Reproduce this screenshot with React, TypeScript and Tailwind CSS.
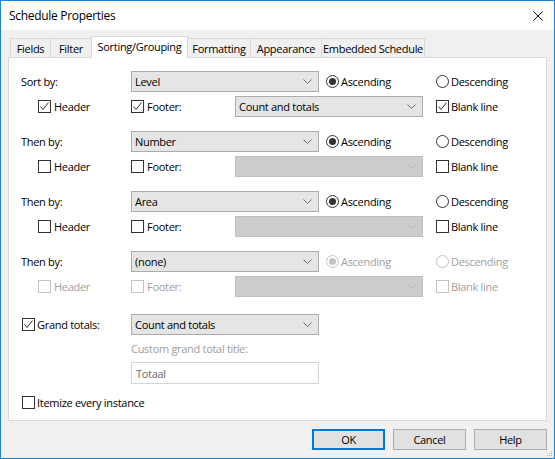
import React from 'react';

const FONT = "font-['Open_Sans',sans-serif] tracking-[-0.3px]";

function Check({ checked = false, disabled = false }: { checked?: boolean; disabled?: boolean }) {
    return (
        <span
            className={`w-[13px] h-[13px] border bg-white flex items-center justify-center shrink-0 ${
                disabled ? 'border-[#c4c4c4]' : 'border-[#333333]'
            }`}
        >
            {checked && (
                <svg width="11" height="11" viewBox="0 0 11 11">
                    <path d="M1.5 5.5 L4 8.5 L9.5 1.5" fill="none" stroke="#333333" strokeWidth="1" />
                </svg>
            )}
        </span>
    );
}

function Radio({ checked = false, disabled = false }: { checked?: boolean; disabled?: boolean }) {
    return (
        <span
            className={`w-[13px] h-[13px] rounded-full border bg-white flex items-center justify-center shrink-0 ${
                disabled ? 'border-[#c4c4c4]' : 'border-[#333333]'
            }`}
        >
            {checked && (
                <span className={`w-[7px] h-[7px] rounded-full ${disabled ? 'bg-[#c4c4c4]' : 'bg-[#333333]'}`} />
            )}
        </span>
    );
}

function Combo({ value = '', disabled = false }: { value?: string; disabled?: boolean }) {
    return (
        <div
            className={`h-[21px] w-[188px] shrink-0 border flex items-center justify-between pl-[3px] pr-[6px] ${
                disabled ? 'bg-[#cccccc] border-[#bfbfbf]' : 'bg-[#e5e5e5] border-[#acacac]'
            }`}
        >
            <span className="text-black">{value}</span>
            <svg width="9" height="5" viewBox="0 0 9 5">
                <path
                    d="M0.5 0.5 L4.5 4.5 L8.5 0.5"
                    fill="none"
                    stroke={disabled ? '#b5b5b5' : '#707070'}
                    strokeWidth="1"
                />
            </svg>
        </div>
    );
}

type GroupProps = {
    label: string;
    value: string;
    disabled?: boolean;
    header?: boolean;
    footer?: boolean;
    footerValue?: string;
    blank?: boolean;
};

function SortGroup({ label, value, disabled = false, header, footer, footerValue, blank }: GroupProps) {
    const txt = disabled ? 'text-[#a0a0a0]' : 'text-black';
    return (
        <div className="flex flex-col gap-[4px]">
            <div className="flex items-center h-[21px]">
                <span className="w-[110px] shrink-0">{label}</span>
                <Combo value={value} />
                <div className="flex items-center w-[110px] ml-[7px] gap-[2px]">
                    <Radio checked disabled={disabled} />
                    <span className={txt}>Ascending</span>
                </div>
                <div className="flex items-center gap-[2px]">
                    <Radio disabled={disabled} />
                    <span className={txt}>Descending</span>
                </div>
            </div>
            <div className="flex items-center h-[21px] pl-[17px]">
                <div className="flex items-center w-[93px] gap-[3px]">
                    <Check checked={header} disabled={disabled} />
                    <span className={txt}>Header</span>
                </div>
                <div className="flex items-center w-[104px] gap-[3px]">
                    <Check checked={footer} disabled={disabled} />
                    <span className={txt}>Footer:</span>
                </div>
                <Combo value={footerValue} disabled={!footer} />
                <div className="flex items-center ml-[13px] gap-[2px]">
                    <Check checked={blank} disabled={disabled} />
                    <span className={txt}>Blank line</span>
                </div>
            </div>
        </div>
    );
}

const tabs = [
    { name: 'Fields', w: 'w-[41px]' },
    { name: 'Filter', w: 'w-[42px]' },
    { name: 'Sorting/Grouping', w: 'w-[97px]', active: true },
    { name: 'Formatting', w: 'w-[64px]' },
    { name: 'Appearance', w: 'w-[72px]' },
    { name: 'Embedded Schedule', w: 'w-[104px]' },
];

export default function App() {
    return (
        <div className={`${FONT} text-[11px] leading-[15px] text-black w-[555px] h-[459px] border border-[#1883d7] bg-[#f0f0f0] relative overflow-hidden`}>
            {/* title bar */}
            <div className="h-[29px] bg-white flex items-center justify-between pl-[8px] pr-[11px]">
                <span className="text-[12px]">Schedule Properties</span>
                <svg width="10" height="10" viewBox="0 0 10 10">
                    <path d="M0.5 0.5 L9.5 9.5 M9.5 0.5 L0.5 9.5" stroke="#111" strokeWidth="1" />
                </svg>
            </div>

            {/* tabs */}
            <div className="h-[27px] flex items-end pl-[9px]">
                {tabs.map((t, i) =>
                    t.active ? (
                        <div
                            key={t.name}
                            className={`${t.w} h-[22px] -mb-px -ml-px relative z-10 bg-white border border-b-0 border-[#d9d9d9] flex items-center justify-center pb-[2px] whitespace-nowrap`}
                        >
                            {t.name}
                        </div>
                    ) : (
                        <div
                            key={t.name}
                            className={`${t.w} h-[19px] ${i > 0 ? '-ml-px' : ''} bg-[#f0f0f0] border border-b-0 border-[#d9d9d9] flex items-center justify-center whitespace-nowrap`}
                        >
                            {t.name}
                        </div>
                    )
                )}
            </div>

            {/* panel */}
            <div className="ml-[7px] w-[539px] h-[364px] bg-white border border-[#d9d9d9] pt-[13px] pl-[12px]">
                <div className="flex flex-col gap-[14px]">
                    <SortGroup label="Sort by:" value="Level" header footer footerValue="Count and totals" blank />
                    <SortGroup label="Then by:" value="Number" />
                    <SortGroup label="Then by:" value="Area" />
                    <SortGroup label="Then by:" value="(none)" disabled />
                </div>

                <div className="flex items-center h-[21px] mt-[17px]">
                    <div className="flex items-center w-[110px] gap-[2px] pl-[1px]">
                        <Check checked />
                        <span>Grand totals:</span>
                    </div>
                    <Combo value="Count and totals" />
                </div>
                <div className="ml-[110px] mt-[6px] text-[#a0a0a0]">Custom grand total title:</div>
                <div className="ml-[110px] mt-[6px] w-[188px] h-[22px] border border-[#d5d5d5] bg-white flex items-center pl-[4px] text-[#6d6d6d]">
                    Totaal
                </div>
                <div className="flex items-center gap-[2px] mt-[11px] pl-[1px]">
                    <Check />
                    <span>Itemize every instance</span>
                </div>
            </div>

            {/* buttons */}
            <div className="flex justify-end gap-[8px] pr-[7px] mt-[8px]">
                <button className="w-[73px] h-[21px] bg-[#e1e1e1] border-2 border-[#0078d7]">OK</button>
                <button className="w-[73px] h-[21px] bg-[#e1e1e1] border border-[#adadad]">Cancel</button>
                <button className="w-[73px] h-[21px] bg-[#e1e1e1] border border-[#adadad]">Help</button>
            </div>

            {/* size grip */}
            <svg className="absolute right-[1px] bottom-[1px]" width="6" height="6" viewBox="0 0 6 6">
                <rect x="4" y="0" width="1" height="1" fill="#b0b0b0" />
                <rect x="2" y="2" width="1" height="1" fill="#b0b0b0" />
                <rect x="4" y="2" width="1" height="1" fill="#b0b0b0" />
                <rect x="0" y="4" width="1" height="1" fill="#b0b0b0" />
                <rect x="2" y="4" width="1" height="1" fill="#b0b0b0" />
                <rect x="4" y="4" width="1" height="1" fill="#b0b0b0" />
            </svg>
        </div>
    );
}
